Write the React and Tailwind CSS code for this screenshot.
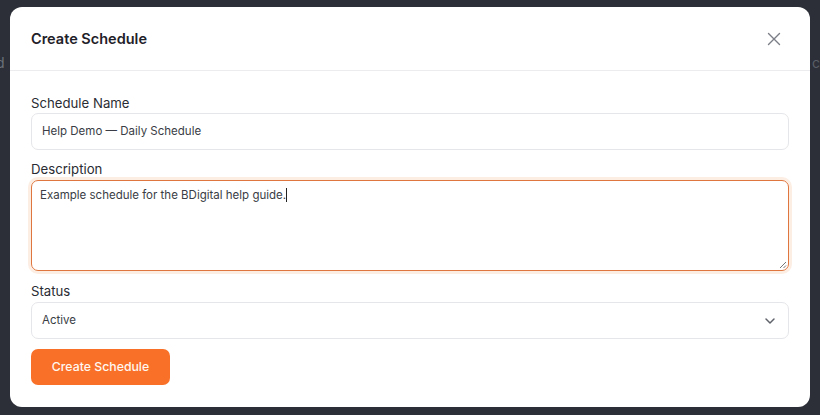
import React from "react";

export default function App() {
  return (
    <div
      className="relative w-[820px] h-[415px] overflow-hidden bg-[#2c2f38]"
      style={{ fontFamily: "Inter, 'Noto Sans', sans-serif" }}
    >
      <div className="absolute left-[-4px] top-[52px] text-[14px] text-[#6b6f78]">d</div>
      <div className="absolute left-[812px] top-[52px] text-[14px] text-[#5a5e66]">c</div>
      <div className="absolute left-[10px] top-[7px] w-[800px] h-[400px] bg-white rounded-[12px] flex flex-col">
        <div className="h-[64px] flex items-center justify-between pl-[21px] pr-[29px] border-b border-[#ececee]">
          <h2 className="text-[14.5px] pt-[1px] font-semibold text-[#1f2129]">Create Schedule</h2>
          <svg width="14" height="14" viewBox="0 0 14 14" fill="none" stroke="#7b7e86" strokeWidth="1.4" strokeLinecap="round">
            <path d="M1.5 1.5 L12.5 12.5 M12.5 1.5 L1.5 12.5" />
          </svg>
        </div>
        <div className="flex flex-col px-[21px] pt-[22px]">
          <label className="text-[13.2px] leading-[20px] text-[#2a2c33]">Schedule Name</label>
          <div className="mt-[0px] h-[37px] border border-[#e5e6e9] rounded-[7px] flex items-center pl-[10px] text-[11.5px] text-[#3a3d45]">
            Help Demo — Daily Schedule
          </div>
          <label className="mt-[9px] text-[13.2px] leading-[20px] text-[#2a2c33]">Description</label>
          <div className="relative mt-[1px] h-[91px] border border-[#e0763f] rounded-[7px] shadow-[0_0_0_3px_#fdeee4] pl-[8px] pt-[6px] text-[11.5px] text-[#3a3d45]">
            <span>Example schedule for the BDigital help guide.</span>
            <span className="inline-block w-[1px] h-[14px] bg-[#222] align-[-3px]"></span>
            <svg className="absolute right-[1px] bottom-[1px]" width="8" height="8" viewBox="0 0 8 8" stroke="#666" strokeWidth="0.9">
              <path d="M7 1 L1 7 M7 4.5 L4.5 7" />
            </svg>
          </div>
          <label className="mt-[10px] text-[13.2px] leading-[20px] text-[#2a2c33]">Status</label>
          <div className="mt-[1px] h-[37px] border border-[#e5e6e9] rounded-[7px] flex items-center justify-between pl-[10px] pr-[12px] text-[11.5px] text-[#3a3d45]">
            <span>Active</span>
            <svg width="12" height="12" viewBox="0 0 12 12" fill="none" stroke="#5f626a" strokeWidth="1.5" strokeLinecap="round" strokeLinejoin="round">
              <path d="M2 4 L6 8 L10 4" />
            </svg>
          </div>
          <button className="mt-[10px] w-[139px] h-[36px] rounded-[7px] bg-[#f97128] text-[#fff7f0] text-[12.3px] font-medium">
            Create Schedule
          </button>
        </div>
      </div>
    </div>
  );
}
